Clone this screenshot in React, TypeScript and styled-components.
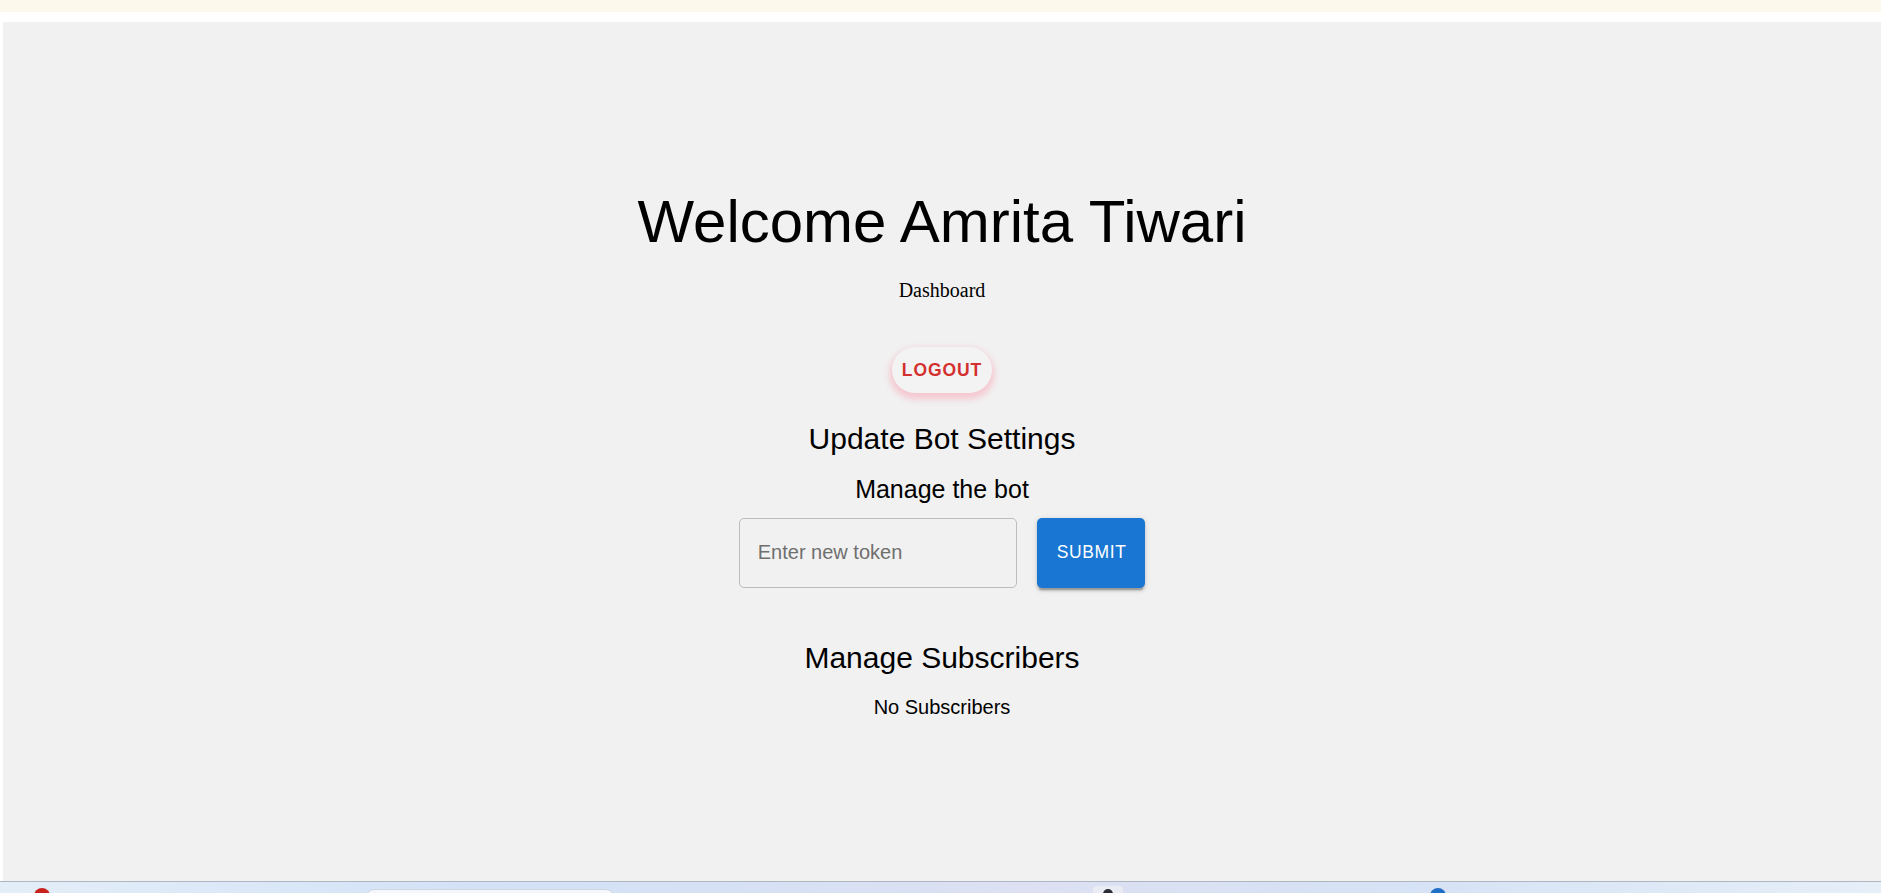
import React, { useState } from 'react';
import styled, { createGlobalStyle } from 'styled-components';

const GlobalStyle = createGlobalStyle`
  html, body {
    margin: 0;
    padding: 0;
    background: #ffffff;
    height: 100%;
  }
  #root {
    height: 100%;
  }
`;

export default function App() {
  const [token, setToken] = useState('');
  const subscribers: string[] = [];

  return (
    <>
      <GlobalStyle />
      <Screen>
        <Banner />
        <Frame>
          <Panel>
            <Title>Welcome Amrita Tiwari</Title>
            <SubTitle>Dashboard</SubTitle>
            <LogoutButton type="button">Logout</LogoutButton>
            <SectionHeading $gap={25.6}>Update Bot Settings</SectionHeading>
            <SmallHeading>Manage the bot</SmallHeading>
            <TokenRow>
              <TokenInput
                placeholder="Enter new token"
                value={token}
                onChange={e => setToken(e.target.value)}
              />
              <SubmitButton type="button">Submit</SubmitButton>
            </TokenRow>
            <SectionHeading $gap={50.4}>Manage Subscribers</SectionHeading>
            {subscribers.length === 0 && <EmptyText>No Subscribers</EmptyText>}
          </Panel>
        </Frame>
        <Taskbar>
          <TrayDot $left={34} $color="#c9221c" />
          <TraySearch />
          <TrayTile $left={1093} />
          <TrayDot $left={1430} $color="#1f6fc4" />
        </Taskbar>
      </Screen>
    </>
  );
}

const Screen = styled.div`
  display: flex;
  flex-direction: column;
  height: 893px;
  overflow: hidden;
`;

const Banner = styled.div`
  height: 12px;
  flex-shrink: 0;
  background: #fcf9ec;
`;

const Frame = styled.div`
  flex: 1;
  display: flex;
  padding: 10px 0 0 3px;
  min-height: 0;
`;

const Panel = styled.main`
  flex: 1;
  display: flex;
  flex-direction: column;
  align-items: center;
  background: #f1f1f1;
  padding-top: 165px;
  font-family: 'Liberation Sans', Arial, sans-serif;
  color: #000;
`;

const Title = styled.h1`
  margin: 0;
  font-size: 60px;
  font-weight: 400;
  line-height: 70px;
  letter-spacing: 0;
`;

const SubTitle = styled.p`
  margin: 22px 0 0;
  font-family: 'Liberation Serif', 'Times New Roman', serif;
  font-size: 20px;
  line-height: 23px;
`;

const LogoutButton = styled.button`
  margin-top: 45px;
  height: 46px;
  padding: 0 10px;
  border: none;
  border-radius: 23px;
  background: #f3f3f3;
  box-shadow: 0 3.75px 6.25px 2.5px rgba(255, 105, 135, 0.3);
  color: #d32f2f;
  font-family: 'Liberation Sans', Arial, sans-serif;
  font-size: 17.5px;
  font-weight: 700;
  letter-spacing: 0.9px;
  text-transform: uppercase;
  cursor: pointer;
`;

const SectionHeading = styled.h2<{ $gap: number }>`
  margin: ${p => p.$gap}px 0 0;
  font-size: 30px;
  font-weight: 400;
  line-height: 40px;
`;

const SmallHeading = styled.h3`
  margin: 10px 0 0;
  font-size: 25px;
  font-weight: 400;
  line-height: 40px;
`;

const TokenRow = styled.div`
  display: flex;
  gap: 20px;
  margin-top: 9px;
  height: 70px;
`;

const TokenInput = styled.input`
  box-sizing: border-box;
  width: 277.5px;
  height: 70px;
  padding: 0 17.5px;
  border: 1px solid #bcbcbc;
  border-radius: 5px;
  background: transparent;
  font-family: 'Liberation Sans', Arial, sans-serif;
  font-size: 20px;
  color: #222;
  outline: none;

  &::placeholder {
    color: #6f6f6f;
  }
`;

const SubmitButton = styled.button`
  box-sizing: border-box;
  width: 108px;
  padding: 0 20px;
  border: none;
  border-radius: 5px;
  background: #1976d2;
  color: #fff;
  font-family: 'Liberation Sans', Arial, sans-serif;
  font-size: 17.5px;
  font-weight: 400;
  letter-spacing: 0.6px;
  text-transform: uppercase;
  box-shadow: 0 3.75px 1.25px -2.5px rgba(0, 0, 0, 0.2),
    0 2.5px 2.5px 0 rgba(0, 0, 0, 0.14), 0 1.25px 6.25px 0 rgba(0, 0, 0, 0.12);
  cursor: pointer;
`;

const EmptyText = styled.p`
  margin: 14px 0 0;
  font-size: 20px;
  line-height: 30px;
`;

const Taskbar = styled.footer`
  position: relative;
  height: 12px;
  flex-shrink: 0;
  box-sizing: border-box;
  border-top: 1px solid #aeb6c1;
  background: linear-gradient(90deg, #e4eef8 0%, #d3e2f7 25%, #dce0f2 55%, #d6e2f5 75%, #e6eff8 100%);
  overflow: hidden;
`;

const TrayDot = styled.span<{ $left: number; $color: string }>`
  position: absolute;
  left: ${p => p.$left}px;
  top: 6px;
  width: 16px;
  height: 16px;
  border-radius: 50%;
  background: ${p => p.$color};
`;

const TraySearch = styled.span`
  position: absolute;
  left: 366px;
  top: 7px;
  width: 246px;
  height: 20px;
  border-radius: 8px;
  background: #f4f7fb;
  border: 1px solid #cfd6e0;
`;

const TrayTile = styled.span`
  position: absolute;
  left: ${(p: { $left: number }) => p.$left}px;
  top: 4px;
  width: 30px;
  height: 20px;
  border-radius: 4px;
  background: #e9ecf3;

  &::after {
    content: '';
    position: absolute;
    left: 10px;
    top: 3px;
    width: 10px;
    height: 10px;
    border-radius: 50%;
    background: #2a2d35;
  }
`;
